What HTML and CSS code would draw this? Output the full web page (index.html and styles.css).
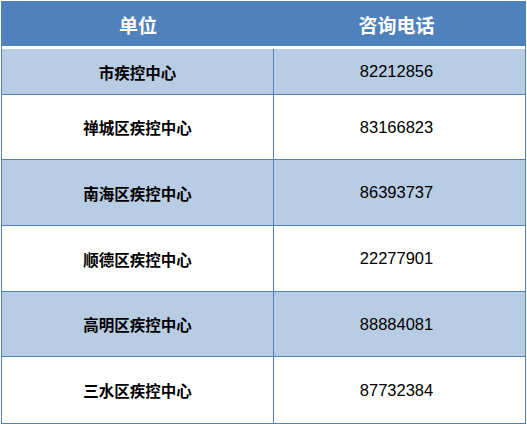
FILE: index.html
```html
<!DOCTYPE html>
<html lang="zh">
<head>
<meta charset="utf-8">
<link rel="stylesheet" href="styles.css">
</head>
<body>
<div class="table">
  <div class="head">
    <div class="hcell">单位</div>
    <div class="hcell hright">咨询电话</div>
  </div>
  <div class="rows">
    <div class="row light r1"><div class="name">市疾控中心</div><div class="tel">82212856</div></div>
    <div class="row r2"><div class="name">禅城区疾控中心</div><div class="tel">83166823</div></div>
    <div class="row light r3"><div class="name">南海区疾控中心</div><div class="tel">86393737</div></div>
    <div class="row r4"><div class="name">顺德区疾控中心</div><div class="tel">22277901</div></div>
    <div class="row light r5"><div class="name">高明区疾控中心</div><div class="tel">88884081</div></div>
    <div class="row r6"><div class="name">三水区疾控中心</div><div class="tel">87732384</div></div>
  </div>
</div>
</body>
</html>
```
FILE: styles.css
```css
html, body {
  margin: 0;
  padding: 0;
  background: #ffffff;
}
.table {
  width: 525px;
  margin: 1px 0 0 1px;
  border-left: 1px solid #4f81bd;
  border-right: 1px solid #4f81bd;
  border-bottom: 1px solid #4f81bd;
  box-sizing: border-box;
  font-family: "Noto Sans CJK SC", "Noto Sans", sans-serif;
}
.head {
  display: grid;
  grid-template-columns: 272px 1fr;
  height: 45px;
  background: #4f81bd;
  color: #ffffff;
  font-weight: bold;
  font-size: 19px;
}
.hcell {
  display: flex;
  align-items: center;
  justify-content: center;
  padding-top: 2px;
}
.hright {
  padding-right: 6px;
}
.rows {
  padding-top: 3px;
}
.row {
  display: grid;
  grid-template-columns: 272px 1fr;
  border-bottom: 1px solid #4f81bd;
}
.row.light {
  background: #b8cce4;
}
.r1 { height: 45px; }
.r2 { height: 64px; }
.r3 { height: 65px; }
.r4 { height: 65px; }
.r5 { height: 64px; }
.r6 { height: 66px; }
.row:last-child { border-bottom: none; }
.name {
  display: flex;
  align-items: center;
  justify-content: center;
  border-right: 1px solid #4f81bd;
  font-weight: bold;
  font-size: 15.5px;
  color: #000000;
}
.tel {
  display: flex;
  align-items: center;
  justify-content: center;
  padding-right: 6px;
  font-family: "Liberation Sans", Arial, sans-serif;
  font-size: 16.5px;
  color: #000000;
}
```
